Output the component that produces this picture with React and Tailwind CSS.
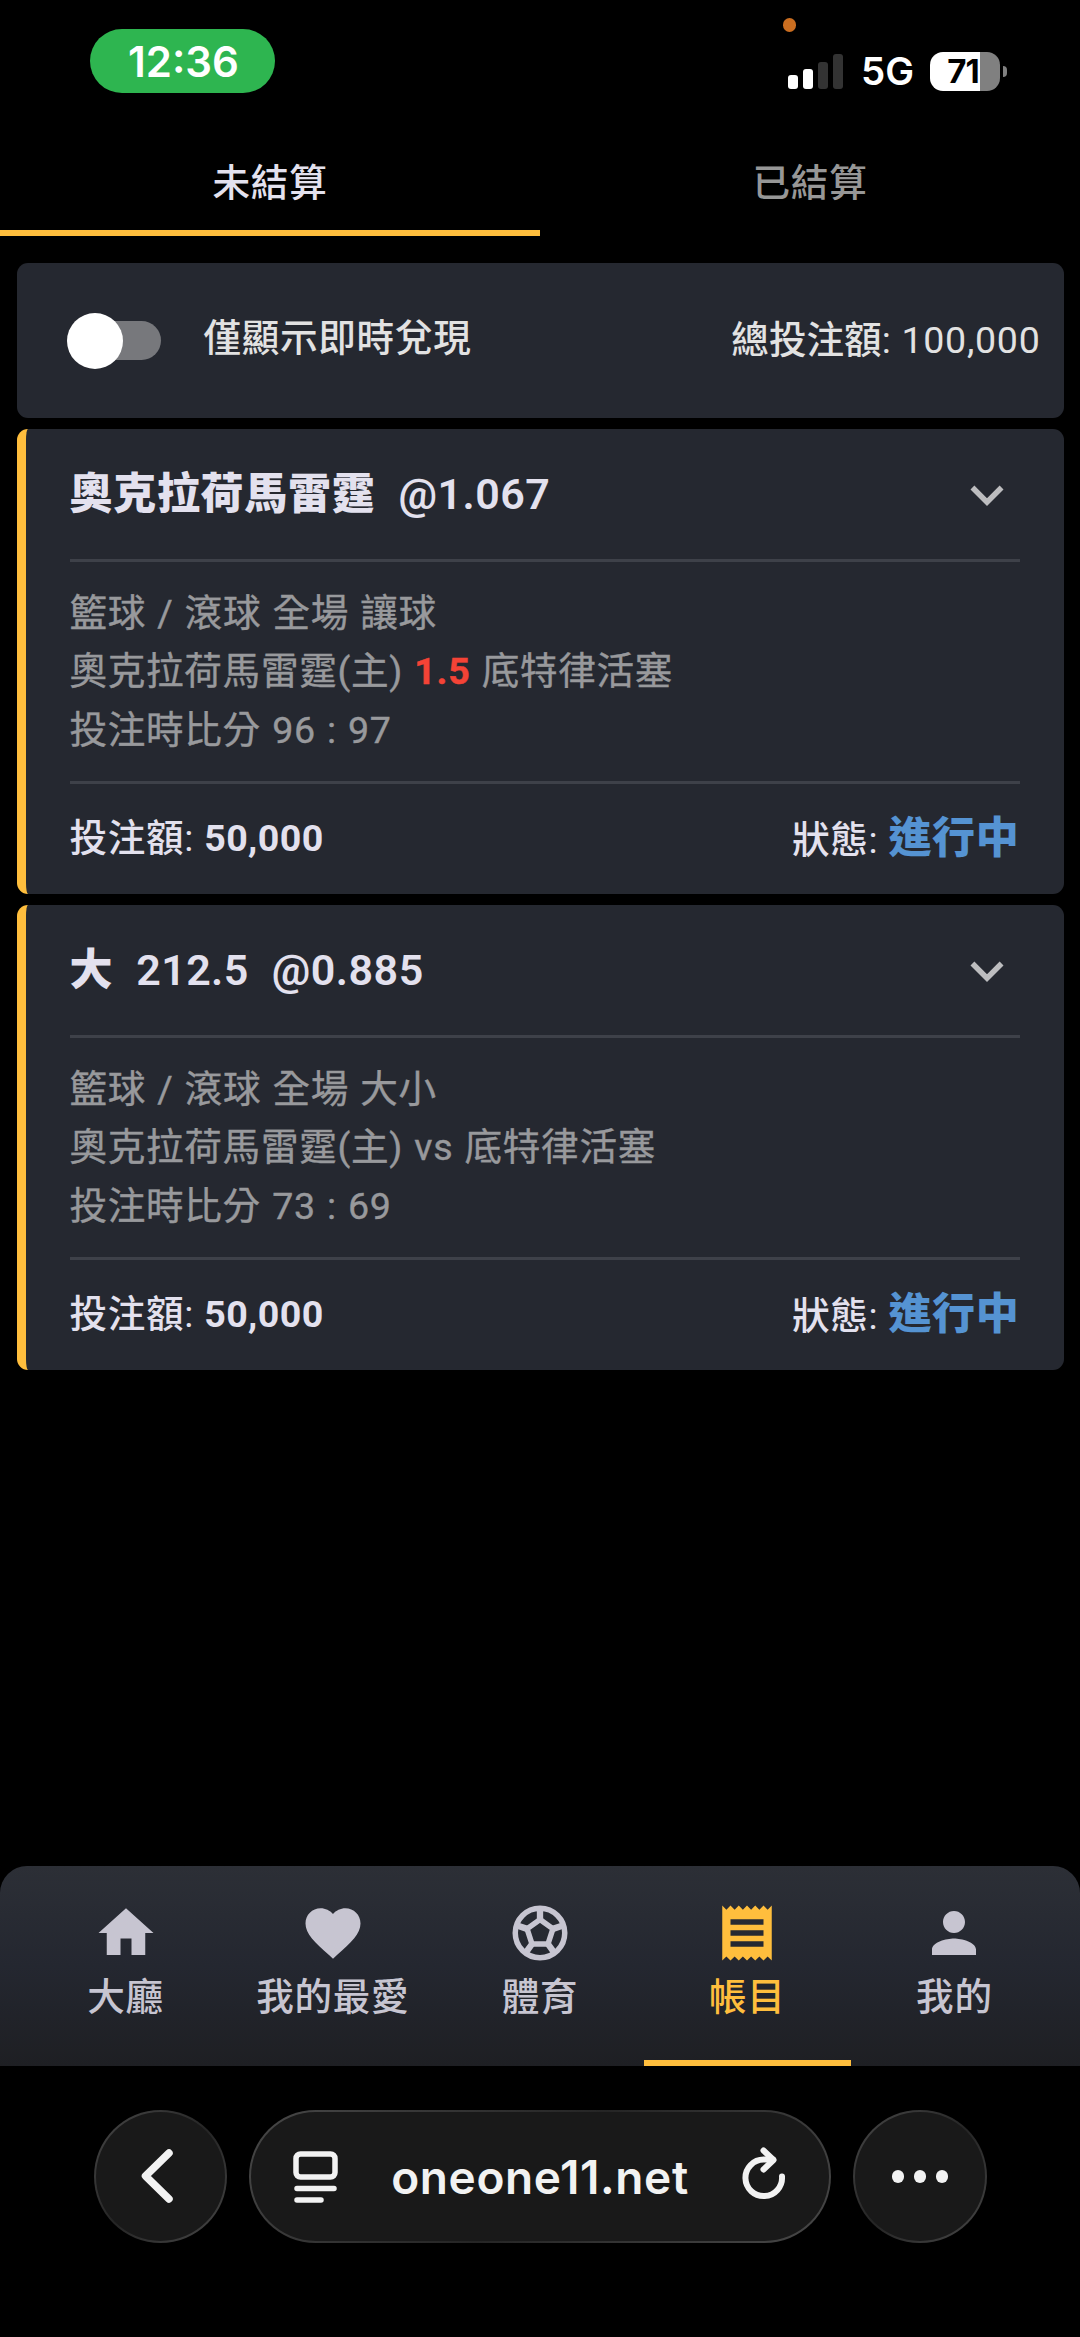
import React from "react";
import {
  MdExpandMore,
  MdHome,
  MdPerson,
  MdReceipt,
} from "react-icons/md";

const bets = [
  {
    title: "奧克拉荷馬雷霆",
    odds: "@1.067",
    category: "籃球 / 滾球 全場 讓球",
    home: "奧克拉荷馬雷霆(主)",
    handicap: "1.5",
    away: "底特律活塞",
    score: "96 : 97",
    stake: "50,000",
    status: "進行中",
  },
  {
    title: "大",
    line: "212.5",
    odds: "@0.885",
    category: "籃球 / 滾球 全場 大小",
    home: "奧克拉荷馬雷霆(主)",
    away: "底特律活塞",
    score: "73 : 69",
    stake: "50,000",
    status: "進行中",
  },
];

const HeartIcon = () => (
  <svg viewBox="0 0 24 24" className="size-[66px]" fill="currentColor">
    <path d="M12 21.35l-1.45-1.32C5.4 15.36 2 12.28 2 8.5 2 5.42 4.42 3 7.5 3c1.74 0 3.41.81 4.5 2.09C13.09 3.81 14.76 3 16.5 3 19.58 3 22 5.42 22 8.5c0 3.78-3.4 6.86-8.55 11.54L12 21.35z" />
  </svg>
);

const BallIcon = () => (
  <svg viewBox="0 0 24 24" className="size-[66px]" fill="none" stroke="currentColor" strokeWidth="2">
    <circle cx="12" cy="12" r="9" />
    <path d="M12 7.100l4.700 3.400L14.900 16H9.100L7.300 10.500z" />
    <path d="M12 7V3M16.700 10.500l3.900-1.300M14.900 16l2.400 3.300M9.100 16l-2.400 3.300M7.300 10.500L3.400 9.200" strokeWidth="2.300" />
  </svg>
);

const navItems = [
  { label: "大廳", icon: <MdHome className="size-[66px]" /> },
  { label: "我的最愛", icon: <HeartIcon /> },
  { label: "體育", icon: <BallIcon /> },
  { label: "帳目", icon: <MdReceipt className="size-[66px]" />, active: true },
  { label: "我的", icon: <MdPerson className="size-[66px]" /> },
];

function StatusBar() {
  return (
    <div className="relative flex h-[130px] justify-between pl-[90px] pr-[73px] font-['Inter','Liberation_Sans',sans-serif] tracking-normal text-white">
      <div className="mt-[29px] flex h-16 w-[185px] items-center justify-center rounded-full bg-[#2eb550] pl-0.5 text-[42px] font-semibold">
        12:36
      </div>
      <span className="absolute left-[783px] top-[18px] h-3.5 w-[13px] rounded-full bg-[#cb6e20]" />
      <div className="mt-[52px] flex h-[39px] items-center">
        <div className="mr-[18px] flex h-[35px] items-end gap-[5px]">
          <span className="h-3.5 w-[10px] rounded-[3px] bg-white" />
          <span className="h-5 w-[10px] rounded-[3px] bg-white" />
          <span className="h-[27px] w-[10px] rounded-[3px] bg-[#333]" />
          <span className="h-[35px] w-[10px] rounded-[3px] bg-[#333]" />
        </div>
        <span className="mr-4 text-[38.5px] font-semibold leading-none">5G</span>
        <div className="flex h-[39px] w-[70px] items-center justify-center rounded-[13px] bg-[linear-gradient(90deg,#fff_72%,#808080_72%)] pr-1 text-[33px] font-bold leading-none tracking-[-1px] text-black">
          71
        </div>
        <span className="ml-[3px] h-[11px] w-1 rounded-r-full bg-[#808080]" />
      </div>
    </div>
  );
}

function Tabs() {
  return (
    <div className="grid h-[106px] grid-cols-2 text-center font-medium leading-[107px]">
      <div className="h-[106px] border-b-[6px] border-[#ffbe3d] text-[#e3e1ee]">未結算</div>
      <div className="text-[#979797]">已結算</div>
    </div>
  );
}

function FilterCard() {
  return (
    <div className="flex h-[155px] items-center rounded-[11px] bg-[#252830] pl-[50px] pr-[23px] text-[#e2e2e2]">
      <div className="flex h-[56px] w-[95px] items-center">
        <div className="ml-1 flex h-[39px] w-[90px] items-center rounded-full bg-[#77787c]">
          <span className="-ml-1 size-14 shrink-0 rounded-full bg-white" />
        </div>
      </div>
      <span className="mb-1 ml-[42px] font-medium">僅顯示即時兌現</span>
      <span className="ml-auto">
        <span className="font-medium tracking-normal">總投注額</span>: 100,000
      </span>
    </div>
  );
}

function BetCard({ bet }) {
  return (
    <div className="h-[465px] rounded-[11px] border-l-[9px] border-[#ffbe3d] bg-[#252830] px-11">
      <div className="flex h-[133px] items-center justify-between border-b-[3px] border-[#3e4149] text-[43px] text-[#e3e1ee]">
        <div className="flex gap-[23px]">
          <span className="font-black">{bet.title}</span>
          {bet.line && <span className="font-semibold tracking-[0.4px]">{bet.line}</span>}
          <span className="font-semibold tracking-[0.5px]">{bet.odds}</span>
        </div>
        <MdExpandMore className="mt-0.5 size-[66px] text-[#bdbdbf]" />
      </div>
      <div className="h-[222px] border-b-[3px] border-[#3e4149] pt-[22px] leading-[58.4px] text-[#98999c] [-webkit-text-stroke:0.4px] [word-spacing:1.2px]">
        <p>{bet.category}</p>
        <p>
          {bet.home}{" "}
          {bet.handicap ? <span className="font-bold text-[#f44336]">{bet.handicap}</span> : "vs"}{" "}
          {bet.away}
        </p>
        <p>投注時比分 {bet.score}</p>
      </div>
      <div className="flex h-[109px] items-center justify-between text-[#e3e1ee]">
        <p>
          <span className="font-medium">投注額</span>: <span className="font-bold tracking-[0.4px]">{bet.stake}</span>
        </p>
        <p>
          <span className="font-medium">狀態</span>:{" "}
          <span className="text-[43px] font-black text-[#5593d2]">{bet.status}</span>
        </p>
      </div>
    </div>
  );
}

function BottomNav() {
  return (
    <nav className="grid h-[200px] grid-cols-5 rounded-t-[27px] bg-linear-to-b from-[#2c2f36] via-[#242730] to-[#1e1f23] px-[22px] font-medium">
      {navItems.map((item) => (
        <div
          key={item.label}
          className={
            item.active
              ? "flex flex-col items-center border-b-[6px] border-[#ffbe3d] pt-[34px] text-[#ffbe3d]"
              : "flex flex-col items-center pt-[34px] text-[#c7c5d1]"
          }
        >
          {item.icon}
          <span className="mt-1 leading-[55px]">{item.label}</span>
        </div>
      ))}
    </nav>
  );
}

const glass =
  "flex h-[133px] items-center rounded-full border-2 border-transparent [background:linear-gradient(#191919,#191919)_padding-box,linear-gradient(135deg,#484848,#252525_50%,#484848)_border-box]";

function BrowserBar() {
  return (
    <div className="flex h-[271px] items-start gap-[22px] pl-[94px] pt-11 text-[#f2f2f2]">
      <div className={`${glass} w-[133px] justify-center`}>
        <svg viewBox="0 0 60 60" className="mr-2 size-[60px]" fill="none" stroke="currentColor" strokeWidth="7.5" strokeLinecap="round" strokeLinejoin="round">
          <path d="M42 6L18.500 29L42 52" />
        </svg>
      </div>
      <div className={`${glass} w-[582px] pl-[42px] pr-[43px]`}>
        <svg viewBox="0 0 45 52" className="h-[52px] w-[45px]" fill="none" stroke="currentColor" strokeWidth="5.500" strokeLinecap="round">
          <rect x="3" y="3" width="39" height="23" rx="4.500" />
          <path d="M4 37.500H41M4 49H28" />
        </svg>
        <span className="flex-1 text-center font-['Inter','Liberation_Sans',sans-serif] text-[46px] font-semibold leading-none tracking-[0.6px]">
          oneone11.net
        </span>
        <svg viewBox="0 0 44 54" className="mb-[5px] h-[54px] w-11" fill="none" stroke="currentColor" strokeWidth="6" strokeLinecap="round" strokeLinejoin="round">
          <path d="M40 29.500A18.300 18.300 0 1 1 21.700 12.500H31" />
          <path d="M21.500 3.500L31.500 13L21.500 22.500" />
        </svg>
      </div>
      <div className={`${glass} w-[134px] justify-center gap-[9.5px]`}>
        <span className="size-[12.5px] rounded-full bg-current" />
        <span className="size-[12.5px] rounded-full bg-current" />
        <span className="size-[12.5px] rounded-full bg-current" />
      </div>
    </div>
  );
}

export default function App() {
  return (
    <div className="flex h-[2337px] w-[1080px] flex-col overflow-hidden bg-black font-['Roboto','Noto_Sans_CJK_TC',sans-serif] text-[37.6px] tracking-[0.7px]">
      <StatusBar />
      <Tabs />
      <main className="flex flex-1 flex-col gap-[11px] px-[16.5px] pt-[27px]">
        <FilterCard />
        {bets.map((bet) => (
          <BetCard key={bet.title} bet={bet} />
        ))}
      </main>
      <BottomNav />
      <BrowserBar />
    </div>
  );
}
